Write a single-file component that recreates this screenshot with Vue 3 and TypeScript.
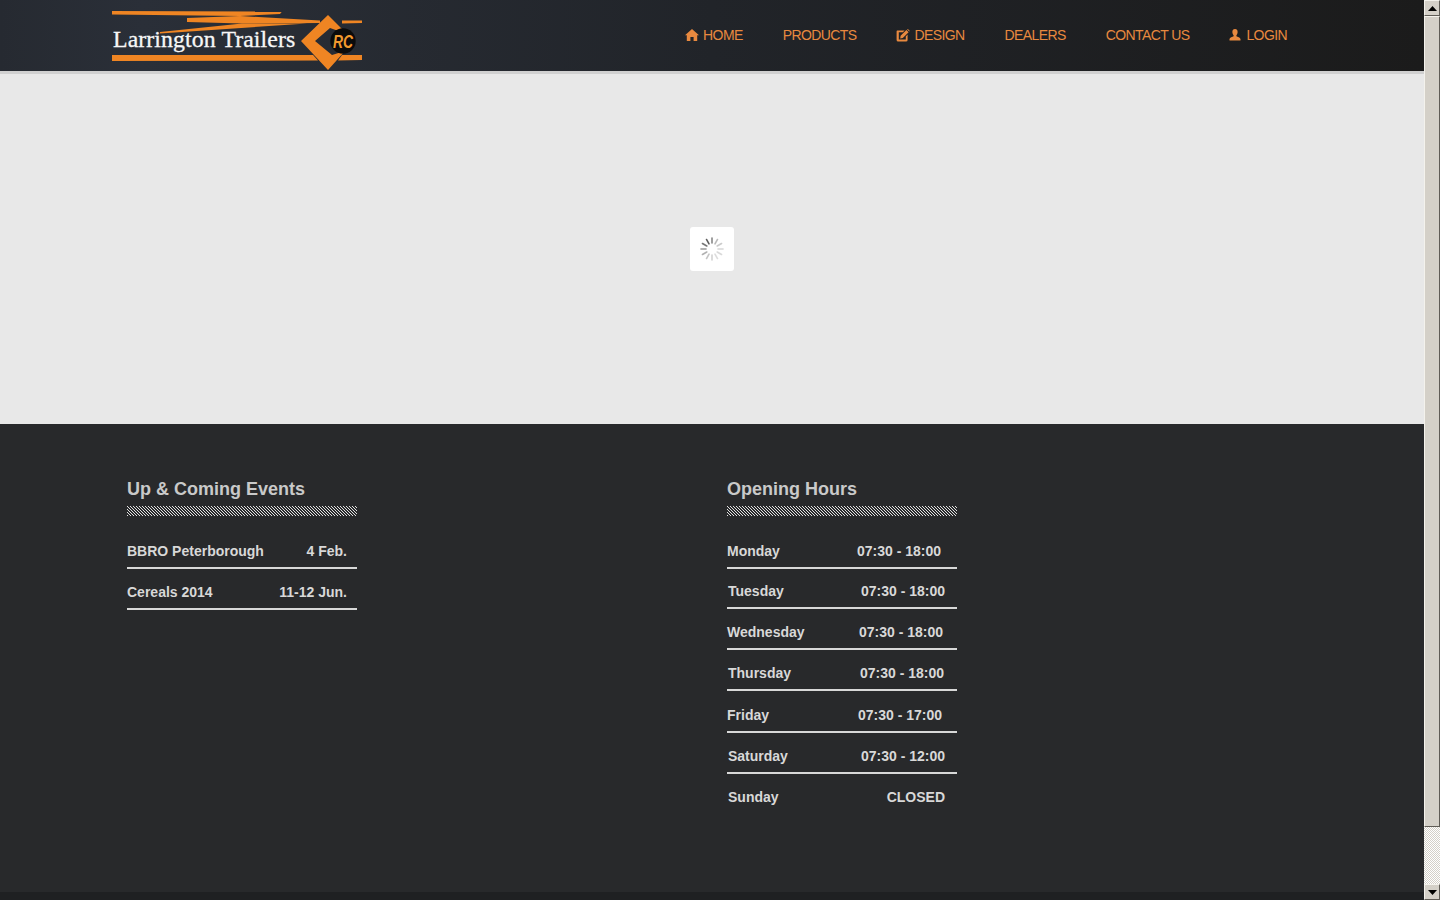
<script setup lang="ts">
interface Row { label: string; value: string; left: number; right: number; rule: number; height: number; top: number }
const events: Row[] = [
  { label: 'BBRO Peterborough', value: '4 Feb.', left: 0, right: 10, rule: 2, height: 41, top: 3 },
  { label: 'Cereals 2014', value: '11-12 Jun.', left: 0, right: 10, rule: 2, height: 41, top: 3 },
]
const hours: Row[] = [
  { label: 'Monday', value: '07:30 - 18:00', left: 0, right: 16, rule: 2, height: 41, top: 3 },
  { label: 'Tuesday', value: '07:30 - 18:00', left: 1, right: 12, rule: 2, height: 40, top: 3 },
  { label: 'Wednesday', value: '07:30 - 18:00', left: 0, right: 14, rule: 2, height: 41, top: 3 },
  { label: 'Thursday', value: '07:30 - 18:00', left: 1, right: 13, rule: 2, height: 41, top: 3 },
  { label: 'Friday', value: '07:30 - 17:00', left: 0, right: 15, rule: 2, height: 42, top: 5 },
  { label: 'Saturday', value: '07:30 - 12:00', left: 1, right: 12, rule: 2, height: 41, top: 3 },
  { label: 'Sunday', value: 'CLOSED', left: 1, right: 12, rule: 0, height: 41, top: 1 },
]
const rowStyle = (row: Row) => ({
  height: row.height - 3 + 'px',
  paddingTop: row.top + 'px',
  paddingLeft: row.left + 'px',
  paddingRight: row.right + 'px',
  borderBottomWidth: row.rule + 'px',
})
const spokes = Array.from({ length: 12 }, (_, i) => ({
  angle: i * 30,
  opacity: [0.7, 0.4, 0.3, 0.24, 0.22, 0.2, 0.26, 0.34, 0.45, 0.6, 0.8, 0.95][i],
}))
</script>

<template>
  <div class="window">
    <div class="page">
      <header class="header">
        <a class="logo" href="#" aria-label="Larrington Trailers">
          <svg width="250" height="60" viewBox="0 0 250 60">
            <g fill="#ef8523">
              <polygon points="0,1 170,1.5 168,4 128,6 0,4.5" />
              <polygon points="75,8 128,6 208,10.5 208,13 130,13.5 75,12" />
              <polygon points="130,13.5 195,13.5 48,23.5 48,22" />
              <polygon points="230,10.5 250,10.5 250,13 230,13.5" />
              <polygon points="0,45 201,45 206,50.5 0,51" />
              <polygon points="230,45 250,45 250,50 226,50.5" />
              <polygon points="189,31 216,5 235,24 218,18 203,31 220,45 233,41 216,60" />
            </g>
            <circle cx="231" cy="31" r="12.7" fill="#0b0b0b" />
            <text class="rc" x="231" y="37.5" text-anchor="middle" textLength="20" lengthAdjust="spacingAndGlyphs">RC</text>
            <text class="logo-text" x="1" y="37">Larrington Trailers</text>
          </svg>
        </a>
        <nav class="nav">
          <a class="nav-link" href="#">
            <svg class="icon" width="14" height="12" viewBox="0 0 14 12"><path d="M7 0 L14 6.2 L12.2 6.2 L12.2 12 L8.6 12 L8.6 8 L5.4 8 L5.4 12 L1.8 12 L1.8 6.2 L0 6.2 Z" fill="#e8893f" /></svg>HOME
          </a>
          <a class="nav-link" href="#">PRODUCTS</a>
          <a class="nav-link" href="#">
            <svg class="icon" width="14" height="13" viewBox="0 0 14 13"><path d="M1.2 1.4 H8.6 L6.8 3.2 H2.8 V10.6 H9.8 V7.4 L11.6 5.6 V11 Q11.6 12.6 10 12.6 H2.2 Q.6 12.6 .6 11 V2.4 Q.6 1.4 1.2 1.4 Z" fill="#e8893f" /><path d="M4.6 6.8 L10.4 1 L12.6 3.2 L6.8 9 L4.2 9.4 Z M11.1 .4 Q11.8 -.2 12.4 .4 L13.4 1.4 Q13.9 2 13.3 2.6 Z" fill="#e8893f" /></svg>DESIGN
          </a>
          <a class="nav-link" href="#">DEALERS</a>
          <a class="nav-link" href="#">CONTACT US</a>
          <a class="nav-link" href="#">
            <svg class="icon user" width="12" height="12" viewBox="0 0 12 12"><path d="M6 0 C8 0 8.8 1.6 8.6 3.4 C8.5 4.6 8 5.6 7.4 6.2 V7.2 C8.6 8 11.2 8.4 11.5 10 V11.4 H.5 V10 C.8 8.4 3.4 8 4.6 7.2 V6.2 C4 5.6 3.5 4.6 3.4 3.4 C3.2 1.6 4 0 6 0 Z" fill="#e8893f" /></svg>LOGIN
          </a>
        </nav>
      </header>

      <main class="main">
        <div class="loader">
          <svg width="24" height="24" viewBox="-12 -12 24 24">
            <line
              v-for="spoke in spokes"
              :key="spoke.angle"
              x1="0" y1="-6" x2="0" y2="-11"
              stroke="#555"
              stroke-width="1.6"
              stroke-linecap="round"
              :opacity="spoke.opacity"
              :transform="`rotate(${spoke.angle})`"
            />
          </svg>
        </div>
      </main>

      <footer class="footer">
        <section class="column">
          <h2 class="title">Up &amp; Coming Events</h2>
          <svg class="hatch" width="230" height="10">
            <defs>
              <pattern id="hatch-a" width="3" height="3" patternUnits="userSpaceOnUse">
                <rect x="0" y="0" width="1" height="1" fill="#e2e2e2" />
                <rect x="1" y="1" width="1" height="1" fill="#e2e2e2" />
                <rect x="2" y="2" width="1" height="1" fill="#e2e2e2" />
              </pattern>
            </defs>
            <rect width="230" height="10" fill="url(#hatch-a)" shape-rendering="crispEdges" />
          </svg>
          <ul class="list">
            <li v-for="row in events" :key="row.label" class="row" :style="rowStyle(row)"><span>{{ row.label }}</span><span>{{ row.value }}</span></li>
          </ul>
        </section>
        <section class="column">
          <h2 class="title">Opening Hours</h2>
          <svg class="hatch" width="230" height="10">
            <rect width="230" height="10" fill="url(#hatch-a)" shape-rendering="crispEdges" />
          </svg>
          <ul class="list">
            <li v-for="row in hours" :key="row.label" class="row" :style="rowStyle(row)"><span>{{ row.label }}</span><span>{{ row.value }}</span></li>
          </ul>
        </section>
      </footer>
      <div class="base"></div>
    </div>

    <aside class="scrollbar" aria-hidden="true">
      <div class="sb-button"><svg width="9" height="5" viewBox="0 0 9 5"><polygon points="4.5,0 9,5 0,5" fill="#000" /></svg></div>
      <div class="sb-thumb"></div>
      <div class="sb-track"></div>
      <div class="sb-button"><svg width="9" height="5" viewBox="0 0 9 5"><polygon points="0,0 9,0 4.5,5" fill="#000" /></svg></div>
    </aside>
  </div>
</template>

<style scoped>
.window {
  display: flex;
  width: 1440px;
  height: 900px;
  overflow: hidden;
  font-family: "Liberation Sans", Arial, sans-serif;
}
.page {
  flex: 0 0 1424px;
  display: flex;
  flex-direction: column;
  height: 900px;
}
.header {
  flex: 0 0 71px;
  display: flex;
  justify-content: space-between;
  padding: 0 137px 0 112px;
  background: linear-gradient(90deg, #262a31 0%, #2a2f38 10%, #212429 50%, #1b1b1b 100%);
  border-bottom: 3px solid #d0d0d0;
}
.logo { display: block; margin-top: 10px; height: 60px; }
.logo svg { display: block; overflow: visible; }
.logo-text {
  font-family: "Liberation Serif", serif;
  font-size: 23.8px;
  font-weight: 400;
  letter-spacing: 0.1px;
  fill: #f7f7f7;
  stroke: #f7f7f7;
  stroke-width: 0.3;
}
.rc {
  font-family: "Liberation Sans", sans-serif;
  font-size: 18px;
  font-weight: 700;
  font-style: italic;
  fill: #f29a2e;
}
.nav { display: flex; align-items: center; gap: 40px; height: 70px; }
.nav-link {
  display: flex;
  align-items: center;
  font-size: 14px;
  letter-spacing: -0.6px;
  color: #e8893f;
  text-decoration: none;
}
.icon { margin-right: 4px; }
.user { margin-right: 5px; }
.main {
  flex: 0 0 350px;
  display: flex;
  justify-content: center;
  align-items: flex-start;
  background: #e8e8e8;
}
.loader {
  width: 44px;
  height: 44px;
  margin-top: 153px;
  display: flex;
  align-items: center;
  justify-content: center;
  background: #fff;
  border-radius: 3px;
}
.footer {
  flex: 1;
  display: grid;
  grid-template-columns: 600px 230px;
  align-content: start;
  padding: 52px 0 0 127px;
  background: #28292b;
}
.column { width: 230px; }
.title {
  margin: 0;
  height: 26px;
  font-size: 18px;
  line-height: 26px;
  font-weight: 700;
  color: #c9c9c9;
}
.hatch {
  display: block;
  margin-top: 4px;
}
.list { list-style: none; margin: 15px 0 0; padding: 0; }
.row {
  box-sizing: border-box;
  display: flex;
  justify-content: space-between;
  align-items: center;
  margin-bottom: 3px;
  font-size: 14px;
  font-weight: 700;
  color: #d8d8d8;
  border-bottom: 0 solid #d8d8d8;
}
.base { flex: 0 0 8px; background: #1f2022; }
.scrollbar {
  flex: 0 0 16px;
  display: flex;
  flex-direction: column;
  height: 900px;
}
.sb-button {
  flex: 0 0 16px;
  box-sizing: border-box;
  display: flex;
  align-items: center;
  justify-content: center;
  background: #d4d0c8;
  border: 1px solid;
  border-color: #f4f2ec #5f5c56 #5f5c56 #f4f2ec;
}
.sb-thumb {
  flex: 0 0 811px;
  box-sizing: border-box;
  background: #d4d0c8;
  border: 1px solid;
  border-color: #f4f2ec #5f5c56 #5f5c56 #f4f2ec;
}
.sb-track {
  flex: 1;
  background-color: #fff;
  background-image: conic-gradient(#d4d0c8 25%, #fff 0 50%, #d4d0c8 0 75%, #fff 0);
  background-size: 2px 2px;
}
</style>
